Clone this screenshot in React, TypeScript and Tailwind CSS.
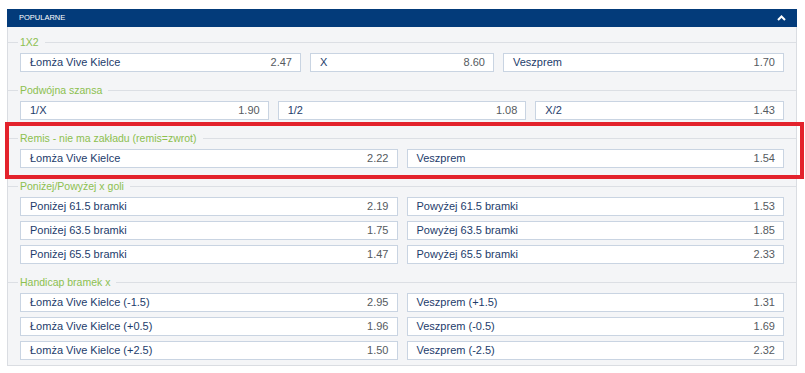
const font = { fontFamily: '"Liberation Sans", Arial, sans-serif' };

type Pick = { label: string; odds: string };

function Odd({ label, odds, className = "" }: Pick & { className?: string }) {
  return (
    <div
      className={`flex h-[19px] items-center justify-between border border-[#c9d4e2] bg-white pl-[9px] pr-[8px] text-[11px] leading-none ${className}`}
    >
      <span className="text-[#1d3c6b]">{label}</span>
      <span className="text-[#555a60]">{odds}</span>
    </div>
  );
}

function Section({ title, children, last }: { title: string; children: React.ReactNode; last?: boolean }) {
  return (
    <div className={last ? "pb-[5px]" : "pb-[12px]"}>
      <div className="flex h-[12px] items-center">
        <div className="h-px w-[10px] bg-[#dcdfe4]" />
        <span className="px-[2px] text-[10.5px] leading-none text-[#8cc04f]">{title}</span>
        <div className="ml-[4px] h-px flex-1 bg-[#dcdfe4]" />
      </div>
      <div className="mt-[5px] flex flex-col gap-[5px] px-[12px]">{children}</div>
    </div>
  );
}

export default function App() {
  return (
    <div className="min-h-[373px] bg-white pt-[9px] pl-[7px]" style={font}>
      <div className="w-[790px]">
        <div className="flex h-[18px] items-center justify-between bg-[#033b7a] pl-[12px] pr-[10px]">
          <span className="text-[7.5px] text-white">POPULARNE</span>
          <svg width="9" height="6" viewBox="0 0 9 6" className="mr-[1px]">
            <polyline points="1,5 4.5,1.5 8,5" fill="none" stroke="white" strokeWidth="2" />
          </svg>
        </div>
        <div className="border-x border-b border-[#dadde2] bg-[#f4f5f7] pt-[9px]">
          <Section title="1X2">
            <div className="flex gap-[9px]">
              <Odd className="w-[281px]" label="Łomża Vive Kielce" odds="2.47" />
              <Odd className="flex-1" label="X" odds="8.60" />
              <Odd className="w-[281px]" label="Veszprem" odds="1.70" />
            </div>
          </Section>
          <Section title="Podwójna szansa">
            <div className="grid grid-cols-3 gap-[9px]">
              <Odd label="1/X" odds="1.90" />
              <Odd label="1/2" odds="1.08" />
              <Odd label="X/2" odds="1.43" />
            </div>
          </Section>
          <div className="relative">
            <div className="pointer-events-none absolute top-[-10px] bottom-[1px] left-[-3px] right-[-8px] border-[4px] border-[#e3222c]" />
            <Section title="Remis - nie ma zakładu (remis=zwrot)">
              <div className="grid grid-cols-2 gap-[9px]">
                <Odd label="Łomża Vive Kielce" odds="2.22" />
                <Odd label="Veszprem" odds="1.54" />
              </div>
            </Section>
          </div>
          <Section title="Poniżej/Powyżej x goli">
            {[
              ["61.5", "2.19", "1.53"],
              ["63.5", "1.75", "1.85"],
              ["65.5", "1.47", "2.33"],
            ].map(([n, a, b]) => (
              <div key={n} className="grid grid-cols-2 gap-[9px]">
                <Odd label={`Poniżej ${n} bramki`} odds={a} />
                <Odd label={`Powyżej ${n} bramki`} odds={b} />
              </div>
            ))}
          </Section>
          <Section title="Handicap bramek x" last>
            {[
              ["(-1.5)", "2.95", "(+1.5)", "1.31"],
              ["(+0.5)", "1.96", "(-0.5)", "1.69"],
              ["(+2.5)", "1.50", "(-2.5)", "2.32"],
            ].map(([h1, a, h2, b]) => (
              <div key={h1} className="grid grid-cols-2 gap-[9px]">
                <Odd label={`Łomża Vive Kielce ${h1}`} odds={a} />
                <Odd label={`Veszprem ${h2}`} odds={b} />
              </div>
            ))}
          </Section>
        </div>
      </div>
    </div>
  );
}
